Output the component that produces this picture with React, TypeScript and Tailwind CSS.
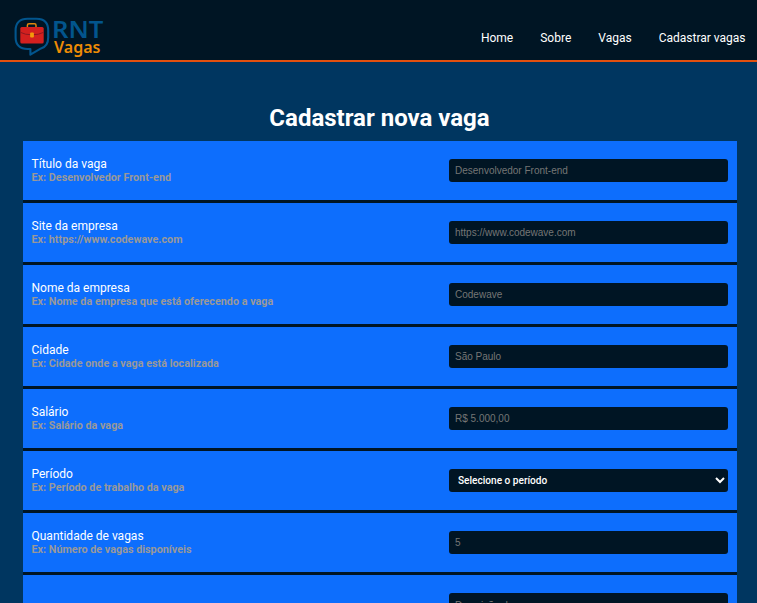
type Field = { label: string; hint: string; placeholder: string; select?: boolean };

const fields: Field[] = [
  { label: 'Título da vaga', hint: 'Ex: Desenvolvedor Front-end', placeholder: 'Desenvolvedor Front-end' },
  { label: 'Site da empresa', hint: 'Ex: https://www.codewave.com', placeholder: 'https://www.codewave.com' },
  { label: 'Nome da empresa', hint: 'Ex: Nome da empresa que está oferecendo a vaga', placeholder: 'Codewave' },
  { label: 'Cidade', hint: 'Ex: Cidade onde a vaga está localizada', placeholder: 'São Paulo' },
  { label: 'Salário', hint: 'Ex: Salário da vaga', placeholder: 'R$ 5.000,00' },
  { label: 'Período', hint: 'Ex: Período de trabalho da vaga', placeholder: 'Selecione o período', select: true },
  { label: 'Quantidade de vagas', hint: 'Ex: Número de vagas disponíveis', placeholder: '5' },
];

function Logo() {
  return (
    <svg width="96" height="54" viewBox="0 -10 96 54" role="img" aria-label="RNT Vagas">
      <path
        d="M13.5 2.8H22.5C30 2.8 34.2 7 34.2 14.5V21.5C34.2 27.5 31.5 31.2 27 32.4L16.4 38.6V33H13.5C6 33 1.6 29 1.6 21.5V14.5C1.6 7 6 2.8 13.5 2.8Z"
        fill="none"
        stroke="#02558d"
        strokeWidth="2.1"
        strokeLinejoin="round"
      />
      <path d="M13.4 11.5V9.2Q13.4 7.7 15 7.7H20.5Q22 7.7 22 9.2V11.5" fill="none" stroke="#e0860c" strokeWidth="1.5" />
      <rect x="6.3" y="11" width="23.4" height="16.4" rx="1.5" fill="#d3201f" />
      <path d="M6.3 16.3Q11 18.8 18 18.8T29.7 16.3" fill="none" stroke="#8c1820" strokeWidth="1" />
      <rect x="16.1" y="16.6" width="3.8" height="5" rx="1" fill="#f29a0c" />
      <text x="38" y="21.8" textLength="51.4" lengthAdjust="spacingAndGlyphs" fontFamily="'Noto Sans', sans-serif" fontSize="23.4" fontWeight="600" fill="#02558d">RNT</text>
      <text x="40" y="37" textLength="46.4" lengthAdjust="spacingAndGlyphs" fontFamily="'Noto Sans', sans-serif" fontSize="15.5" fontWeight="600" fill="#ee8c05">Vagas</text>
    </svg>
  );
}

const controlClass = 'h-[23px] w-[279px] rounded-[3px] bg-[#001524]';

function Row({ field }: { field: Field }) {
  return (
    <div className="flex h-[62px] shrink-0 items-center justify-between border-b-[3px] border-[#001524] bg-[#0d6efd] pr-[9px] pl-[8.5px]">
      <label className="flex flex-col pb-px text-[12px] leading-[14px] text-white">
        {field.label}
        <span className="text-[10.8px] leading-[13px] font-bold text-[#999999]">{field.hint}</span>
      </label>
      {field.select ? (
        <div className="relative flex">
          <select className={`${controlClass} appearance-none pl-[9px] font-['Roboto',sans-serif] text-[10.1px] font-medium text-white`}>
            <option>{field.placeholder}</option>
          </select>
          <svg className="pointer-events-none absolute top-[7px] right-[3px]" width="10" height="9" viewBox="0 0 10 9">
            <path d="M1 2L5 6L9 2" fill="none" stroke="white" strokeWidth="2" />
          </svg>
        </div>
      ) : (
        <input
          className={`${controlClass} px-[6px] font-['Liberation_Sans',Arial,sans-serif] text-[10px] placeholder:text-[#757575]`}
          placeholder={field.placeholder}
        />
      )}
    </div>
  );
}

export default function App() {
  return (
    <div className="flex h-[603px] flex-col overflow-hidden bg-[#003660] font-['Roboto',sans-serif]">
      <header className="flex h-[62px] shrink-0 justify-between border-b-2 border-[#e2500f] bg-[#001524] pt-1.5 pr-[11.5px] pl-[14px]">
        <Logo />
        <nav className="flex h-16 items-center gap-[27px] text-[12px] text-white">
          <a>Home</a>
          <a>Sobre</a>
          <a>Vagas</a>
          <a>Cadastrar vagas</a>
        </nav>
      </header>
      <main className="flex min-h-0 flex-1 flex-col pt-10 pr-5 pl-[23px]">
        <h1 className="h-[39px] shrink-0 pr-px text-center text-[24px] leading-[32px] font-bold text-white">Cadastrar nova vaga</h1>
        {fields.map((f) => (
          <Row key={f.label} field={f} />
        ))}
        <div className="flex h-[62px] shrink-0 justify-end bg-[#0d6efd] pt-[18px] pr-[9px]">
          <textarea
            className="h-[60px] w-[279px] resize-none rounded-[3px] bg-[#001524] px-[6px] pt-[7px] font-['Liberation_Sans',Arial,sans-serif] text-[10px] leading-[11px] placeholder:text-[#757575]"
            placeholder="Descrição da vaga"
          />
        </div>
      </main>
    </div>
  );
}
